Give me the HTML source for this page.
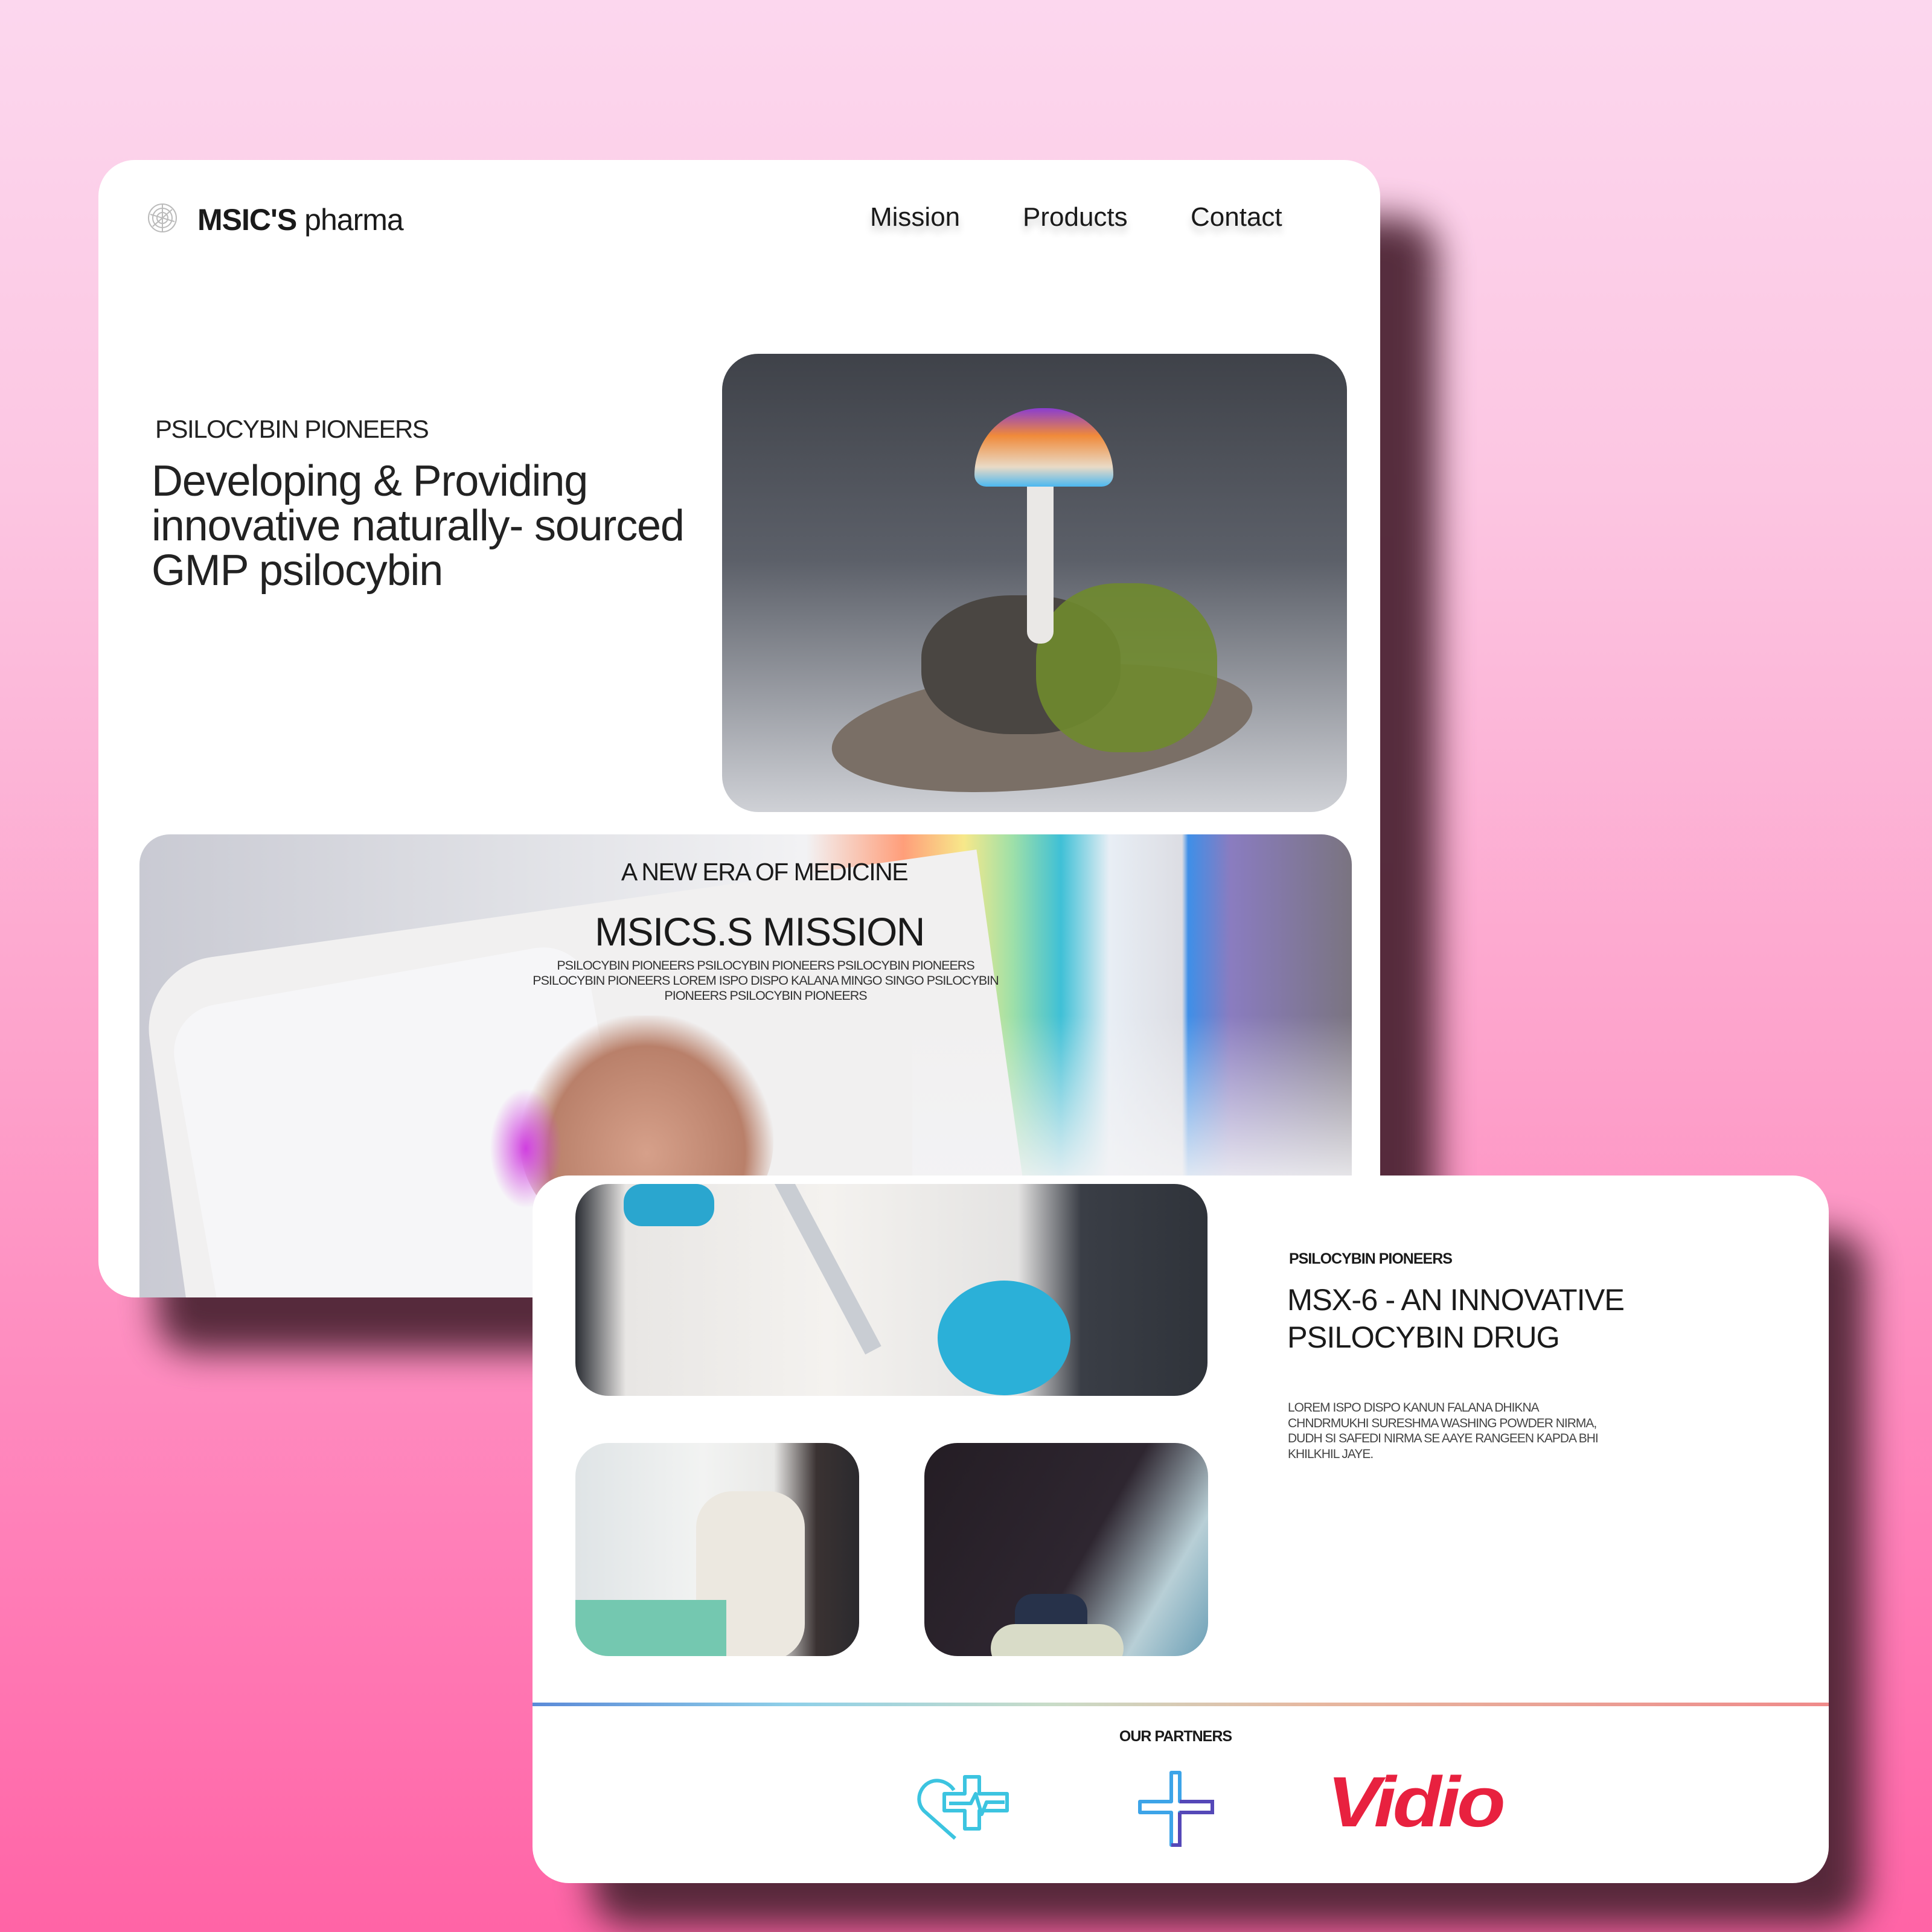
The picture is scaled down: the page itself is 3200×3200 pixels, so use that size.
<!DOCTYPE html>
<html><head><meta charset="utf-8">
<style>
*{margin:0;padding:0;box-sizing:border-box}
html,body{width:3200px;height:3200px;overflow:hidden}
body{position:relative;font-family:"Liberation Sans",sans-serif;color:#1a1a1a;
background:linear-gradient(180deg,#fcd7ee 0%,#fcc6e2 25%,#fda2cb 55%,#ff7fb8 80%,#ff64a6 100%)}
.abs{position:absolute}
.card{position:absolute;background:#fff;border-radius:60px}
.sh{position:absolute;background:#4e2535;filter:blur(30px);border-radius:60px}
.t{position:absolute;white-space:nowrap}
</style></head><body>

<div class="sh" style="left:260px;top:360px;width:2120px;height:1880px;opacity:.95"></div>
<div class="card" style="left:163px;top:265px;width:2123px;height:1884px;overflow:hidden">
  <svg class="abs" style="left:80px;top:70px" width="52" height="52" viewBox="0 0 52 52">
    <g fill="none" stroke="#bbb" stroke-width="2"><circle cx="26" cy="26" r="23"/><circle cx="26" cy="26" r="16"/><circle cx="26" cy="26" r="9"/><path d="M6 20 L46 32 M10 40 L42 12 M26 3 V49"/></g>
  </svg>
  <div class="t" style="left:164px;top:70px;font-size:50px;line-height:58px;letter-spacing:-1px"><b>MSIC'S</b> pharma</div>
  <div class="t" style="left:1278px;top:70px;font-size:44px;line-height:50px;text-shadow:0 10px 12px rgba(0,0,0,.2)">Mission</div>
  <div class="t" style="left:1531px;top:70px;font-size:44px;line-height:50px;text-shadow:0 10px 12px rgba(0,0,0,.2)">Products</div>
  <div class="t" style="left:1809px;top:70px;font-size:44px;line-height:50px;text-shadow:0 10px 12px rgba(0,0,0,.2)">Contact</div>

  <div class="t" style="left:94px;top:422px;font-size:42px;letter-spacing:-1.5px;color:#222">PSILOCYBIN PIONEERS</div>
  <div class="t" style="left:88px;top:495px;font-size:72px;line-height:74px;letter-spacing:-1.2px;color:#222">Developing &amp; Providing<br>innovative naturally- sourced<br>GMP psilocybin</div>

  <div class="abs" style="left:1033px;top:321px;width:1035px;height:759px;border-radius:60px;overflow:hidden;background:linear-gradient(180deg,#3f4249 0%,#5c6069 45%,#9a9da4 75%,#cfd1d6 100%)">
    <div class="abs" style="left:180px;top:520px;width:700px;height:200px;border-radius:50%;background:#7a6f66;transform:rotate(-6deg)"></div>
    <div class="abs" style="left:330px;top:400px;width:330px;height:230px;border-radius:45%;background:#4a4642"></div>
    <div class="abs" style="left:520px;top:380px;width:300px;height:280px;border-radius:45%;background:#6f8a2e;opacity:.9"></div>
    <div class="abs" style="left:505px;top:150px;width:44px;height:330px;border-radius:20px;background:#eae8e6"></div>
    <div class="abs" style="left:418px;top:90px;width:230px;height:130px;border-radius:115px 115px 20px 20px;background:linear-gradient(180deg,#8a3dd0,#f08a3a 35%,#e9dac6 75%,#4cb8f0)"></div>
  </div>

  <div class="abs" style="left:68px;top:1117px;width:2008px;height:780px;border-radius:50px 50px 0 0;overflow:hidden;background:linear-gradient(90deg,#c9cad3 0%,#dfe0e5 30%,#f2f2f4 55%,#ff9e7a 63%,#f7e88a 68%,#9fe0a8 72%,#3fc0d6 76%,#e8eef5 80%,#dcdde3 86%,#3e8fe8 86.5%,#8a7cc0 90%,#7a7480 100%)">
    <div class="abs" style="left:0;top:220px;width:1400px;height:700px;background:#f1f0f0;border-radius:120px 0 0 0;transform:rotate(-8deg);transform-origin:0 0"></div>
    <div class="abs" style="left:1280px;top:300px;width:900px;height:300px;background:linear-gradient(180deg,rgba(255,255,255,0),#f3f3f5)"></div>
    <div class="abs" style="left:100px;top:230px;width:700px;height:700px;background:#f6f6f8;border-radius:80px;transform:rotate(-10deg)"></div>
    <div class="abs" style="left:630px;top:300px;width:420px;height:380px;border-radius:45%;background:radial-gradient(ellipse at 50% 60%,#d6a08a 0%,#b9806a 55%,rgba(180,120,110,0) 72%)"></div>
    <div class="abs" style="left:580px;top:420px;width:120px;height:200px;border-radius:50%;background:radial-gradient(#d040e0,rgba(210,60,230,0) 70%)"></div>
  </div>
  <div class="t" style="left:0;width:2206px;text-align:center;top:1156px;font-size:41px;letter-spacing:-1.5px">A NEW ERA OF MEDICINE</div>
  <div class="t" style="left:0;width:2190px;text-align:center;top:1240px;font-size:66px;letter-spacing:-1.5px">MSICS.S MISSION</div>
  <div class="t" style="left:0;width:2210px;text-align:center;top:1322px;font-size:21.5px;line-height:25px;letter-spacing:-1px;color:#333">PSILOCYBIN PIONEERS PSILOCYBIN PIONEERS PSILOCYBIN PIONEERS<br>PSILOCYBIN PIONEERS LOREM ISPO DISPO KALANA MINGO SINGO PSILOCYBIN<br>PIONEERS PSILOCYBIN PIONEERS</div>
</div>

<div class="sh" style="left:980px;top:2040px;width:2110px;height:1150px;opacity:.95"></div>
<div class="card" style="left:882px;top:1947px;width:2147px;height:1172px;overflow:hidden">
  <div class="abs" style="left:71px;top:14px;width:1047px;height:351px;border-radius:55px;overflow:hidden;background:linear-gradient(90deg,#2a2d33 0%,#e8e6e4 8%,#f4f2ef 40%,#e4e3e2 70%,#3a3e46 80%,#2f333a 100%)">
    <div class="abs" style="left:80px;top:0;width:150px;height:70px;border-radius:30px;background:#2aa6cf"></div>
    <div class="abs" style="left:600px;top:160px;width:220px;height:190px;border-radius:50%;background:#2bb0d8"></div>
    <div class="abs" style="left:330px;top:0;width:30px;height:320px;background:#c9cdd3;transform:rotate(-28deg);transform-origin:0 0"></div>
  </div>
  <div class="abs" style="left:71px;top:443px;width:470px;height:353px;border-radius:55px;overflow:hidden;background:linear-gradient(90deg,#dfe4e6 0%,#f2f3f2 45%,#e9e9e7 70%,#3a3232 85%,#2b2a2e 100%)">
    <div class="abs" style="left:200px;top:80px;width:180px;height:280px;border-radius:60px;background:#ece8e0"></div>
    <div class="abs" style="left:0;top:260px;width:250px;height:100px;background:#74c8b0"></div>
  </div>
  <div class="abs" style="left:649px;top:443px;width:470px;height:353px;border-radius:55px;overflow:hidden;background:linear-gradient(120deg,#241d24 0%,#2e2630 55%,#b8cfd6 80%,#6b9fb6 100%)">
    <div class="abs" style="left:150px;top:250px;width:120px;height:110px;border-radius:30px;background:#27324a"></div>
    <div class="abs" style="left:110px;top:300px;width:220px;height:80px;border-radius:40px;background:#d9dcc8"></div>
  </div>

  <div class="t" style="left:1253px;top:124px;font-size:25px;font-weight:bold;letter-spacing:-1px">PSILOCYBIN PIONEERS</div>
  <div class="t" style="left:1250px;top:175px;font-size:50.5px;line-height:62px;letter-spacing:-1px">MSX-6 - AN INNOVATIVE<br>PSILOCYBIN DRUG</div>
  <div class="t" style="left:1251px;top:372px;font-size:21px;line-height:25.5px;letter-spacing:-1px;color:#444">LOREM ISPO DISPO KANUN FALANA DHIKNA<br>CHNDRMUKHI SURESHMA WASHING POWDER NIRMA,<br>DUDH SI SAFEDI NIRMA SE AAYE RANGEEN KAPDA BHI<br>KHILKHIL JAYE.</div>

  <div class="abs" style="left:0;top:873px;width:2147px;height:6px;background:linear-gradient(90deg,#5b8ad8,#8fd0e8 20%,#c9dcc8 40%,#e6b8a0 60%,#ef8a8a 100%)"></div>
  <div class="t" style="left:0;width:2130px;text-align:center;top:915px;font-size:25px;font-weight:bold;letter-spacing:-1px">OUR PARTNERS</div>

  <svg class="abs" style="left:636px;top:990px" width="160" height="115" viewBox="0 0 160 115">
    <g fill="none" stroke="#3cc4e0" stroke-width="6" stroke-linejoin="round">
      <path d="M64 108 L12 62 C-8 40 14 4 44 14 C52 17 58 22 62 28"/>
      <path d="M80 6 H104 V34 H150 V62 H104 V92 H80 V62 H46 V34 H80 Z"/>
      <path d="M54 50 H90 L98 34 L108 68 L116 48 H146"/>
    </g>
  </svg>
  <svg class="abs" style="left:1002px;top:985px" width="130" height="130" viewBox="0 0 130 130">
    <path d="M56 4 H70 V52 H124 V70 H70 V124 H56 V70 H4 V52 H56 Z" fill="none" stroke="#3da4e8" stroke-width="6" stroke-linejoin="round"/>
    <path d="M70 70 V124 H56 M70 52 H124 V70 H70" fill="none" stroke="#5548b8" stroke-width="6"/>
  </svg>
  <div class="t" style="left:1316px;top:970px;font-size:118px;font-weight:bold;font-style:italic;color:#e8213f;font-family:'Liberation Sans',sans-serif;letter-spacing:-5px;transform:scaleX(1.12);transform-origin:0 0">Vidio</div>
</div>
</body></html>
